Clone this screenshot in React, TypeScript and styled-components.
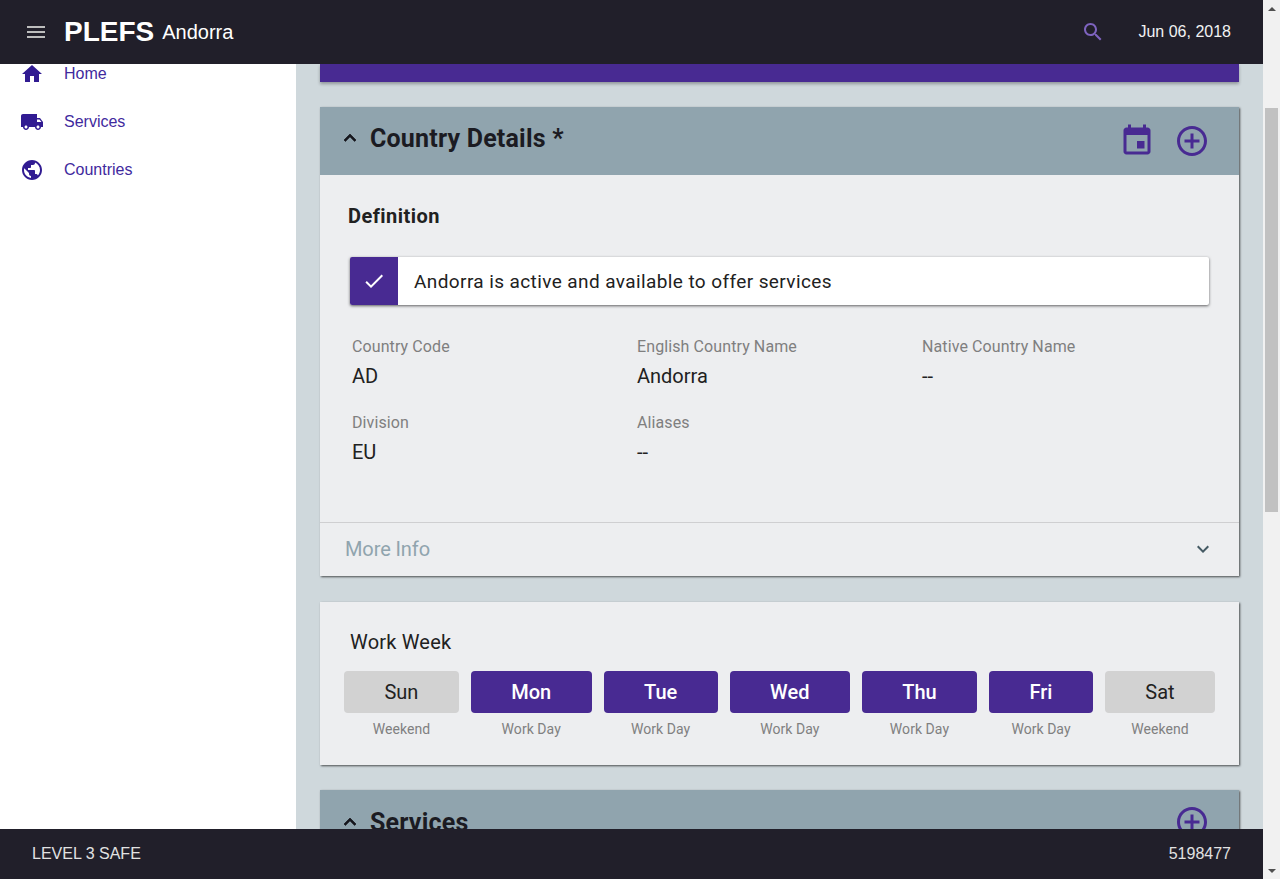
import styled, { createGlobalStyle } from "styled-components";

const PURPLE = "#482a92";
const NAVY = "#211f2a";

const GlobalStyle = createGlobalStyle`
  html, body {
    margin: 0;
    height: 100%;
    overflow: hidden;
  }
  body {
    font-family: Roboto, "Liberation Sans", Arial, sans-serif;
    color: #212121;
  }
`;

const Page = styled.div`
  display: flex;
  width: 1280px;
  height: 879px;
  overflow: hidden;
`;

const Shell = styled.div`
  flex: 1;
  min-width: 0;
  display: flex;
  flex-direction: column;
`;

const TopBar = styled.header`
  flex: none;
  height: 64px;
  padding: 0 32px 0 24px;
  background: ${NAVY};
  color: #fff;
  display: flex;
  align-items: center;
  position: relative;
  z-index: 2;
`;

const MenuButton = styled.svg`
  width: 24px;
  height: 24px;
  fill: #bdbdbd;
  margin-right: 16px;
`;

const Brand = styled.span`
  font-family: "Liberation Sans", Arial, sans-serif;
  font-size: 28px;
  font-weight: 700;
  margin-right: 8px;
`;

const CountryName = styled.span`
  font-family: "Liberation Sans", Arial, sans-serif;
  font-size: 20px;
  flex: 1;
`;

const SearchIcon = styled.svg`
  width: 24px;
  height: 24px;
  fill: #7e63bf;
  margin-right: 33px;
`;

const DateText = styled.span`
  font-family: "Liberation Sans", Arial, sans-serif;
  font-size: 16px;
  color: #f2f2f2;
`;

const Body = styled.div`
  flex: 1;
  min-height: 0;
  display: flex;
`;

const Sidebar = styled.nav`
  flex: none;
  width: 296px;
  background: #fff;
`;

const NavList = styled.div`
  margin-top: -14px;
`;

const NavItem = styled.a`
  height: 48px;
  display: flex;
  align-items: center;
  padding-left: 20px;
  font-size: 16px;
  color: #3f2a9e;
  font-family: "Liberation Sans", Arial, sans-serif;
`;

const NavIcon = styled.svg`
  width: 24px;
  height: 24px;
  fill: #311b92;
  margin-right: 20px;
`;

const Content = styled.main`
  flex: 1;
  min-width: 0;
  background: #cfd8dc;
  padding: 0 24px;
  overflow: hidden;
  display: flex;
  flex-direction: column;
  gap: 25px;
`;

const Banner = styled.div`
  flex: none;
  height: 18px;
  background: ${PURPLE};
  box-shadow: 0 2px 3px rgba(0, 0, 0, 0.3);
`;

const Card = styled.section`
  flex: none;
  background: #edeef0;
  box-shadow: 1px 1px 2px rgba(0, 0, 0, 0.65);
`;

const WeekCard = styled(Card)`
  margin-top: 1px;
`;

const CardHeader = styled.div<{ $compact?: boolean }>`
  height: ${(p) => (p.$compact ? 64 : 68)}px;
  background: #90a4ae;
  display: flex;
  align-items: center;
  padding: 0 29px 0 18px;
`;

const Chevron = styled.svg<{ $compact?: boolean }>`
  width: 24px;
  height: 24px;
  fill: #16161c;
  stroke: #16161c;
  stroke-width: 0.7;
  margin-right: 8px;
  margin-bottom: ${(p) => (p.$compact ? 0 : 7)}px;
  flex: none;
`;

const CardTitle = styled.h2<{ $compact?: boolean }>`
  margin: 0 0 ${(p) => (p.$compact ? 0 : 6)}px;
  flex: 1;
  font-size: 25px;
  font-weight: 700;
  letter-spacing: 0.2px;
  color: #1b1b22;
`;

const HeaderAction = styled.svg`
  width: 36px;
  height: 36px;
  fill: ${PURPLE};
  margin-left: 19px;
  flex: none;
`;

const CardBody = styled.div`
  padding: 29px 30px 57px 28px;
`;

const SectionTitle = styled.h3`
  margin: 0 0 29px;
  font-size: 20px;
  line-height: 24px;
  font-weight: 700;
  letter-spacing: 0.45px;
  color: #212121;
`;

const ActiveRow = styled.div`
  height: 48px;
  margin-left: 2px;
  background: #fff;
  display: flex;
  align-items: center;
  box-shadow: 0 1px 3px rgba(0, 0, 0, 0.6);
  border-radius: 2px;
`;

const CheckBox = styled.div`
  width: 48px;
  height: 48px;
  background: ${PURPLE};
  border-radius: 2px 0 0 2px;
  display: flex;
  align-items: center;
  justify-content: center;
  margin-right: 16px;
`;

const CheckIcon = styled.svg`
  width: 24px;
  height: 24px;
  fill: #fff;
`;

const ActiveLabel = styled.span`
  font-size: 19px;
  letter-spacing: 0.4px;
  color: #212121;
`;

const FieldGrid = styled.div`
  margin: 31px 0 0 4px;
  display: grid;
  grid-template-columns: repeat(3, 285px);
  row-gap: 23px;
`;

const FieldLabel = styled.div`
  font-size: 16px;
  line-height: 22px;
  letter-spacing: 0.1px;
  color: #7f7f7f;
`;

const FieldValue = styled.div`
  margin-top: 5px;
  font-size: 20px;
  line-height: 26px;
  color: #212121;
`;

const MoreInfo = styled.div`
  height: 51px;
  padding: 0 24px 2px 25px;
  border-top: 1px solid #cfcfd1;
  display: flex;
  align-items: center;
  justify-content: space-between;
  font-size: 20px;
  letter-spacing: -0.1px;
  color: #90a4ae;
`;

const MoreIcon = styled.svg`
  width: 24px;
  height: 24px;
  fill: #455a64;
`;

const WeekBody = styled.div`
  padding: 26px 24px 26px 24px;
  height: 163px;
  box-sizing: border-box;
`;

const WeekTitle = styled.div`
  margin: 0 0 15px 6px;
  font-size: 20px;
  line-height: 28px;
  letter-spacing: 0.2px;
  color: #212121;
`;

const Days = styled.div`
  display: flex;
  gap: 12px;
`;

const Day = styled.div`
  flex: 1 1 auto;
  text-align: center;
`;

const DayButton = styled.div<{ $work: boolean }>`
  height: 42px;
  line-height: 42px;
  padding: 0 40px;
  border-radius: 4px;
  font-size: 20px;
  font-weight: ${(p) => (p.$work ? 500 : 400)};
  background: ${(p) => (p.$work ? PURPLE : "#d2d2d2")};
  color: ${(p) => (p.$work ? "#fff" : "#212121")};
`;

const DayNote = styled.div`
  margin-top: 8px;
  font-size: 14px;
  line-height: 16px;
  letter-spacing: 0.05px;
  color: #808080;
`;

const BottomBar = styled.footer`
  flex: none;
  height: 50px;
  padding: 0 32px;
  background: ${NAVY};
  color: #e2e2e2;
  display: flex;
  align-items: center;
  justify-content: space-between;
  font-family: "Liberation Sans", Arial, sans-serif;
  font-size: 16px;
  position: relative;
  z-index: 2;
`;

const Scrollbar = styled.div`
  flex: none;
  width: 17px;
  background: #f1f1f1;
  display: flex;
  flex-direction: column;
  align-items: center;
`;

const ScrollArrow = styled.div<{ $down?: boolean }>`
  flex: none;
  height: 17px;
  width: 17px;
  display: flex;
  align-items: center;
  justify-content: center;
  &::before {
    content: "";
    border-left: 4px solid transparent;
    border-right: 4px solid transparent;
    ${(p) => (p.$down ? "border-top: 4px solid #505050;" : "border-bottom: 4px solid #505050;")}
  }
`;

const ScrollTrack = styled.div`
  flex: 1;
  width: 100%;
  padding-top: 91px;
  box-sizing: border-box;
`;

const ScrollThumb = styled.div`
  height: 404px;
  background: #c1c1c1;
  margin: 0 2px;
`;

const ICONS = {
  menu: "M3 18h18v-2H3v2zm0-5h18v-2H3v2zm0-7v2h18V6H3z",
  search:
    "M15.5 14h-.79l-.28-.27C15.41 12.59 16 11.11 16 9.5 16 5.91 13.09 3 9.5 3S3 5.91 3 9.5 5.91 16 9.5 16c1.61 0 3.09-.59 4.23-1.57l.27.28v.79l5 4.99L20.49 19l-4.99-5zm-6 0C7.01 14 5 11.99 5 9.5S7.01 5 9.5 5 14 7.01 14 9.5 11.99 14 9.5 14z",
  home: "M10 20v-6h4v6h5v-8h3L12 3 2 12h3v8z",
  truck:
    "M20 8h-3V4H3c-1.1 0-2 .9-2 2v11h2c0 1.66 1.34 3 3 3s3-1.34 3-3h6c0 1.66 1.34 3 3 3s3-1.34 3-3h2v-5l-3-4zM6 18.5c-.83 0-1.5-.67-1.5-1.5s.67-1.5 1.5-1.5 1.5.67 1.5 1.5-.67 1.5-1.5 1.5zm13.5-9l1.96 2.5H17V9.5h2.5zm-1.5 9c-.83 0-1.5-.67-1.5-1.5s.67-1.5 1.5-1.5 1.5.67 1.5 1.5-.67 1.5-1.5 1.5z",
  globe:
    "M12 2C6.48 2 2 6.48 2 12s4.48 10 10 10 10-4.48 10-10S17.52 2 12 2zm-1 17.93c-3.95-.49-7-3.85-7-7.93 0-.62.08-1.21.21-1.79L9 15v1c0 1.1.9 2 2 2v1.93zm6.9-2.54c-.26-.81-1-1.39-1.9-1.39h-1v-3c0-.55-.45-1-1-1H8v-2h2c.55 0 1-.45 1-1V7h2c1.1 0 2-.9 2-2v-.41c2.93 1.19 5 4.06 5 7.41 0 2.08-.8 3.97-2.1 5.39z",
  event:
    "M17 12h-5v5h5v-5zM16 1v2H8V1H6v2H5c-1.11 0-1.99.9-1.99 2L3 19c0 1.1.89 2 2 2h14c1.1 0 2-.9 2-2V5c0-1.1-.9-2-2-2h-1V1h-2zm3 18H5V8h14v11z",
  add: "M13 7h-2v4H7v2h4v4h2v-4h4v-2h-4V7zm-1-5C6.48 2 2 6.48 2 12s4.48 10 10 10 10-4.48 10-10S17.52 2 12 2zm0 18c-4.41 0-8-3.59-8-8s3.59-8 8-8 8 3.59 8 8-3.59 8-8 8z",
  less: "M12 8l-6 6 1.41 1.41L12 10.83l4.59 4.58L18 14z",
  more: "M16.59 8.59L12 13.17 7.41 8.59 6 10l6 6 6-6z",
  check: "M9 16.17L4.83 12l-1.42 1.41L9 19 21 7l-1.41-1.41z",
};

const NAV = [
  { label: "Home", icon: ICONS.home },
  { label: "Services", icon: ICONS.truck },
  { label: "Countries", icon: ICONS.globe },
];

const FIELDS = [
  { label: "Country Code", value: "AD" },
  { label: "English Country Name", value: "Andorra" },
  { label: "Native Country Name", value: "--" },
  { label: "Division", value: "EU" },
  { label: "Aliases", value: "--" },
];

const DAYS = [
  { name: "Sun", work: false },
  { name: "Mon", work: true },
  { name: "Tue", work: true },
  { name: "Wed", work: true },
  { name: "Thu", work: true },
  { name: "Fri", work: true },
  { name: "Sat", work: false },
];

export default function App() {
  return (
    <Page>
      <GlobalStyle />
      <Shell>
        <TopBar>
          <MenuButton viewBox="0 0 24 24">
            <path d={ICONS.menu} />
          </MenuButton>
          <Brand>PLEFS</Brand>
          <CountryName>Andorra</CountryName>
          <SearchIcon viewBox="0 0 24 24">
            <path d={ICONS.search} />
          </SearchIcon>
          <DateText>Jun 06, 2018</DateText>
        </TopBar>
        <Body>
          <Sidebar>
            <NavList>
              {NAV.map((item) => (
                <NavItem key={item.label}>
                  <NavIcon viewBox="0 0 24 24">
                    <path d={item.icon} />
                  </NavIcon>
                  {item.label}
                </NavItem>
              ))}
            </NavList>
          </Sidebar>
          <Content>
            <Banner />
            <Card>
              <CardHeader>
                <Chevron viewBox="0 0 24 24">
                  <path d={ICONS.less} />
                </Chevron>
                <CardTitle>Country Details *</CardTitle>
                <HeaderAction viewBox="0 0 24 24">
                  <path d={ICONS.event} />
                </HeaderAction>
                <HeaderAction viewBox="0 0 24 24">
                  <path d={ICONS.add} />
                </HeaderAction>
              </CardHeader>
              <CardBody>
                <SectionTitle>Definition</SectionTitle>
                <ActiveRow>
                  <CheckBox>
                    <CheckIcon viewBox="0 0 24 24">
                      <path d={ICONS.check} />
                    </CheckIcon>
                  </CheckBox>
                  <ActiveLabel>Andorra is active and available to offer services</ActiveLabel>
                </ActiveRow>
                <FieldGrid>
                  {FIELDS.map((field) => (
                    <div key={field.label}>
                      <FieldLabel>{field.label}</FieldLabel>
                      <FieldValue>{field.value}</FieldValue>
                    </div>
                  ))}
                </FieldGrid>
              </CardBody>
              <MoreInfo>
                More Info
                <MoreIcon viewBox="0 0 24 24">
                  <path d={ICONS.more} />
                </MoreIcon>
              </MoreInfo>
            </Card>
            <WeekCard>
              <WeekBody>
                <WeekTitle>Work Week</WeekTitle>
                <Days>
                  {DAYS.map((day) => (
                    <Day key={day.name}>
                      <DayButton $work={day.work}>{day.name}</DayButton>
                      <DayNote>{day.work ? "Work Day" : "Weekend"}</DayNote>
                    </Day>
                  ))}
                </Days>
              </WeekBody>
            </WeekCard>
            <Card>
              <CardHeader $compact>
                <Chevron $compact viewBox="0 0 24 24">
                  <path d={ICONS.less} />
                </Chevron>
                <CardTitle $compact>Services</CardTitle>
                <HeaderAction viewBox="0 0 24 24">
                  <path d={ICONS.add} />
                </HeaderAction>
              </CardHeader>
            </Card>
          </Content>
        </Body>
        <BottomBar>
          <span>LEVEL 3 SAFE</span>
          <span>5198477</span>
        </BottomBar>
      </Shell>
      <Scrollbar>
        <ScrollArrow />
        <ScrollTrack>
          <ScrollThumb />
        </ScrollTrack>
        <ScrollArrow $down />
      </Scrollbar>
    </Page>
  );
}
